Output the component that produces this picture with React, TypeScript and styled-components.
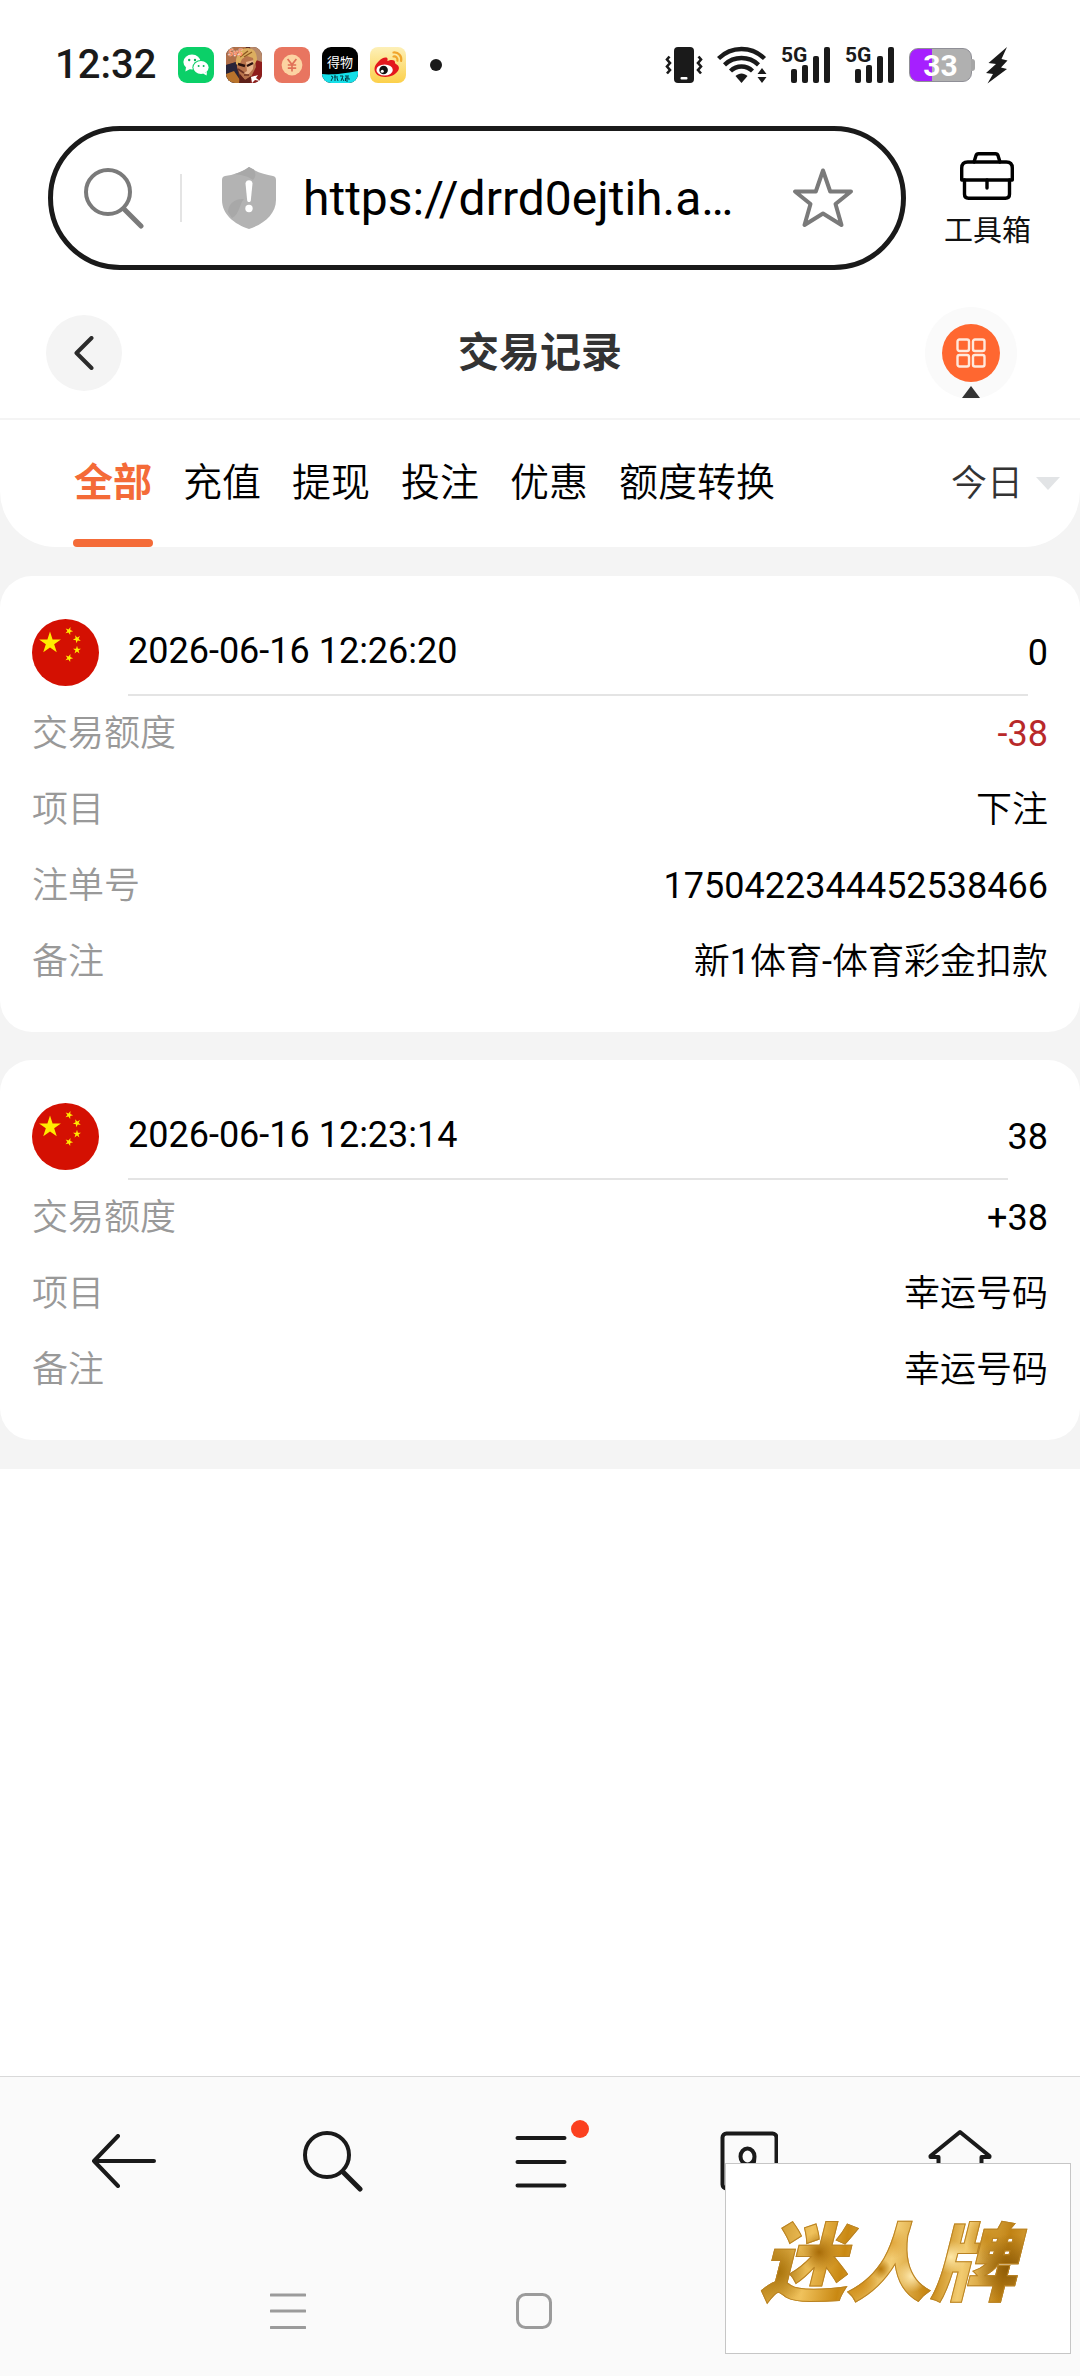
import React, { useState } from 'react';
import styled, { createGlobalStyle, css } from 'styled-components';

const GlobalStyle = createGlobalStyle`
  *, *::before, *::after { box-sizing: border-box; }
  body {
    margin: 0;
    background: #ffffff;
    color: #000000;
    font-family: Roboto, "Noto Sans CJK SC DemiLight", "Noto Sans CJK SC", sans-serif;
  }
  button, input, select { font: inherit; color: inherit; }
  svg { display: block; flex: none; }
`;

const Page = styled.div`
  min-height: 100vh;
  display: flex;
  flex-direction: column;
`;

const iconButton = css`
  padding: 0;
  border: 0;
  background: none;
  display: flex;
  align-items: center;
  justify-content: center;
`;

/* ---------- status bar ---------- */

const StatusBar = styled.div`
  height: 126px;
  padding: 4px 72px 0 55px;
  display: flex;
  align-items: center;
  justify-content: space-between;
  color: #1a1a1a;
`;

const StatusGroup = styled.div<{ $gap: number }>`
  display: flex;
  align-items: center;
  gap: ${(p) => p.$gap}px;
`;

const Clock = styled.time`
  width: 111px;
  font-size: 40px;
  font-weight: 500;
  line-height: 48px;
`;

const MoreDot = styled.span`
  width: 12px;
  height: 12px;
  margin-left: 12px;
  border-radius: 50%;
  background: #1a1a1a;
`;

const Battery = styled.div`
  position: relative;
  width: 63px;
  height: 34px;
  border-radius: 9px;
  border: 1px solid #8f8f96;
  background: linear-gradient(90deg, #a61fff 0 22px, #b0b0b0 22px);
  color: #ffffff;
  font-size: 30px;
  font-weight: 700;
  line-height: 34px;
  text-align: center;

  &::after {
    content: '';
    position: absolute;
    right: -4px;
    top: 10px;
    width: 4px;
    height: 12px;
    border-radius: 0 3px 3px 0;
    background: #a6a6a6;
  }
`;

/* ---------- browser address bar ---------- */

const AddressRow = styled.div`
  display: flex;
  align-items: center;
  gap: 38px;
  padding: 0 49px 0 48px;
`;

const AddressBox = styled.form`
  flex: 1;
  min-width: 0;
  height: 144px;
  padding: 0 47px 0 31px;
  display: flex;
  align-items: center;
  border: 5px solid #1a1a1a;
  border-radius: 72px;
`;

const AddressDivider = styled.span`
  width: 2px;
  height: 48px;
  margin: 0 40px 0 36px;
  background: #e4e4e4;
`;

const AddressInput = styled.input`
  flex: 1;
  min-width: 0;
  height: 64px;
  margin: 0 24px 0 27px;
  padding: 0;
  border: 0;
  outline: 0;
  background: none;
  font-size: 48px;
  color: #000000;
`;

const IconButton = styled.button`
  ${iconButton}
`;

const ToolboxButton = styled.button`
  ${iconButton}
  flex-direction: column;
  gap: 9px;
  padding-top: 9px;
  font-family: Roboto, "Noto Sans CJK SC", sans-serif;
  font-size: 29px;
  line-height: 44px;
  white-space: nowrap;
  color: #111111;
`;

/* ---------- page header ---------- */

const Header = styled.header`
  height: 150px;
  padding: 18px 63px 0 46px;
  display: grid;
  grid-template-columns: 109px 1fr 92px;
  align-items: center;
  border-bottom: 2px solid #f4f4f4;
`;

const BackButton = styled.button`
  ${iconButton}
  width: 76px;
  height: 76px;
  border-radius: 50%;
  background: #f4f4f4;
`;

const Title = styled.h1`
  margin: 0;
  font-size: 41px;
  line-height: 60px;
  font-weight: 700;
  text-align: center;
  color: #333333;
  font-family: Roboto, "Noto Sans CJK SC", sans-serif;
`;

const MenuButton = styled.button`
  ${iconButton}
  position: relative;
  width: 92px;
  height: 92px;
  border-radius: 50%;
  background: #fafafa;

  &::after {
    content: '';
    position: absolute;
    left: 37px;
    bottom: 1px;
    border: 9px solid transparent;
    border-top: 0;
    border-bottom: 12px solid #333333;
  }
`;

const MenuDisc = styled.span`
  width: 58px;
  height: 58px;
  border-radius: 50%;
  background: #ff6730;
  display: flex;
  align-items: center;
  justify-content: center;
`;

/* ---------- records ---------- */

const Records = styled.main`
  background: #f4f4f4;
  padding-bottom: 29px;
`;

const FilterBar = styled.div`
  height: 127px;
  padding: 0 20px 0 74px;
  display: flex;
  justify-content: space-between;
  border-radius: 0 0 56px 56px;
  background: #ffffff;
`;

const Tabs = styled.nav`
  display: flex;
  gap: 31px;
`;

const Tab = styled.button<{ $active: boolean }>`
  position: relative;
  padding: 0;
  border: 0;
  background: none;
  font-family: ${(p) => (p.$active ? 'Roboto, "Noto Sans CJK SC", sans-serif' : 'inherit')};
  font-size: 39px;
  line-height: 127px;
  white-space: nowrap;
  font-weight: ${(p) => (p.$active ? 700 : 400)};
  color: ${(p) => (p.$active ? '#f46b38' : '#000000')};

  &::after {
    content: '';
    position: absolute;
    left: -1px;
    right: -1px;
    bottom: 0;
    height: 8px;
    border-radius: 4px;
    background: ${(p) => (p.$active ? '#f46b38' : 'transparent')};
  }
`;

const Period = styled.label`
  display: flex;
  align-items: center;
  gap: 13px;
`;

const PeriodSelect = styled.select`
  appearance: none;
  width: 72px;
  height: 60px;
  padding: 0;
  border: 0;
  outline: 0;
  background: none;
  font-size: 36px;
  color: #333333;
`;

const Caret = styled.span`
  border: 12px solid transparent;
  border-bottom: 0;
  border-top: 13px solid #e2e4e6;
`;

const List = styled.div`
  display: grid;
  gap: 28px;
  padding-top: 29px;
`;

const Card = styled.article`
  padding: 33px 32px 32px;
  border-radius: 32px;
  background: #ffffff;
  font-size: 36px;
`;

const CardHead = styled.div`
  height: 87px;
  display: flex;
  align-items: center;
`;

const CardDate = styled.time`
  flex: 1;
  align-self: stretch;
  margin-left: 29px;
  border-bottom: 2px solid #e4e4e4;
  line-height: 84px;
`;

const Fields = styled.dl`
  margin: 0;
`;

const Field = styled.div`
  height: 76px;
  display: flex;
  align-items: center;
  justify-content: space-between;
  line-height: 52px;
`;

const FieldName = styled.dt`
  color: #999999;
`;

const FieldValue = styled.dd<{ $negative?: boolean }>`
  margin: 0;
  color: ${(p) => (p.$negative ? '#b8292a' : '#000000')};
`;

/* ---------- bottom bars ---------- */

const Footer = styled.footer`
  position: relative;
  margin-top: auto;
  border-top: 1px solid #d9d9d9;
  background: #fafafa;
`;

const Toolbar = styled.nav`
  height: 168px;
  padding: 0 18px 0 20px;
  display: grid;
  grid-template-columns: repeat(5, 1fr);
`;

const SystemNav = styled.nav`
  height: 131px;
  display: flex;
  justify-content: center;
  gap: 206px;
  padding-right: 12px;
`;

const SystemButton = styled.button`
  ${iconButton}
  width: 40px;
`;

const Stamp = styled.div`
  position: absolute;
  right: 9px;
  bottom: 22px;
  width: 346px;
  height: 191px;
  padding: 0 12px 4px 0;
  display: flex;
  align-items: center;
  justify-content: center;
  border: 1px solid #c6c6c6;
  background: #ffffff;
`;

const StampText = styled.strong`
  padding: 0 16px 0 8px;
  font-family: "Noto Sans CJK SC", sans-serif;
  font-size: 85px;
  font-weight: 900;
  font-style: italic;
  line-height: 120px;
  white-space: nowrap;
  color: transparent;
  -webkit-text-stroke: 1px #b98222;
  background:
    radial-gradient(circle at 24% 46%, #a86c08 0, transparent 9%),
    radial-gradient(circle at 9% 62%, #a8720a 0, transparent 12%),
    radial-gradient(circle at 50% 38%, #e0a63c 0, transparent 10%),
    radial-gradient(circle at 57% 66%, #ffeab0 0, transparent 9%),
    radial-gradient(circle at 38% 70%, #d08a14 0, transparent 10%),
    radial-gradient(circle at 46% 60%, #b97a0c 0, transparent 6%),
    radial-gradient(circle at 63% 74%, #c98712 0, transparent 6%),
    radial-gradient(circle at 71% 50%, #ffe9a8 0, transparent 8%),
    radial-gradient(circle at 92% 60%, #8c5a06 0, transparent 13%),
    radial-gradient(circle at 84% 34%, #c98d1e 0, transparent 9%),
    linear-gradient(100deg, #b47a0e, #f0c25c 22%, #c98812 34%, #f3cd74 50%, #c58411 64%, #f2cb70 74%, #c08214 88%, #e3ae48);
  background-clip: text;
  -webkit-background-clip: text;
`;

/* ---------- drawings ---------- */

const WeChatIcon = () => (
  <svg width="36" height="36" viewBox="0 0 36 36">
    <rect width="36" height="36" rx="9" fill="#0bd068" />
    <ellipse cx="14" cy="15" rx="8.6" ry="7.4" fill="#fff" />
    <path d="M8 20 7.4 24.6 12 22z" fill="#fff" />
    <ellipse cx="23" cy="20.5" rx="8.6" ry="7.4" fill="#0bd068" />
    <ellipse cx="23" cy="20.5" rx="7.6" ry="6.4" fill="#fff" />
    <path d="M29 25 28.6 28.6 25 26.4z" fill="#fff" />
    <g fill="#0bb45a">
      <circle cx="11.2" cy="13" r="1.2" />
      <circle cx="17" cy="13" r="1.2" />
      <circle cx="20.6" cy="19" r="1" />
      <circle cx="25.6" cy="19" r="1" />
    </g>
  </svg>
);

const GameIcon = () => (
  <svg width="36" height="36" viewBox="0 0 36 36">
    <clipPath id="game"><rect width="36" height="36" rx="9" /></clipPath>
    <g clipPath="url(#game)">
      <rect width="36" height="36" fill="#5a2a22" />
      <path d="M0 0h20L14 14 0 18z" fill="#b0704a" />
      <path d="M24 0h12v20l-8-4z" fill="#b98a6a" />
      <path d="M27 12l9 3v21H24z" fill="#8e1d1c" />
      <path d="M0 18l10-3 4 21H0z" fill="#27243a" />
      <path d="M0 27l8-3 8 12H0z" fill="#b9732b" />
      <path d="M11 12 20 6l9 5 1 9-5 10-6 3-5-5-3-8z" fill="#b8734c" />
      <path d="M20 15l1 9-3 2 4 2 5-6 1-9z" fill="#e8b48c" />
      <path d="M10 17C9 8 15 1 22 1c6 0 9 5 9 12l-3 5-1-7-6-2-5 3-3 7z" fill="#dcae60" />
      <path d="M14 10l8-6M18 10l8-5" stroke="#8f5a22" strokeWidth="1.4" />
      <path d="M12 17l7 2M21 19l6-3" stroke="#2c120e" strokeWidth="2.4" />
      <path d="M12 22l6 4M18 28h5" stroke="#6e3222" strokeWidth="1.6" />
      <path d="M14 27l5 6 6-4-1 7H13z" fill="#5e2018" />
      <path d="M25 30l7-2-2 3 4 3-5-1-3 3z" fill="#fff" />
      <text x="2" y="9" fill="#ff5a1e" stroke="#fff" strokeWidth="0.3" fontFamily="Roboto, sans-serif" fontWeight="700" fontStyle="italic" fontSize="9">5v5</text>
    </g>
  </svg>
);

const CoinIcon = () => (
  <svg width="36" height="36" viewBox="0 0 36 36">
    <rect width="36" height="36" rx="8" fill="#e87560" />
    <circle cx="18" cy="18" r="10.4" fill="#fcd3a2" />
    <path d="M13.6 12 18 17.6 22.4 12M18 17.6V24.4M13.8 18h8.4M13.8 21.2h8.4" fill="none" stroke="#e07058" strokeWidth="1.7" />
  </svg>
);

const ShopIcon = () => (
  <svg width="36" height="36" viewBox="0 0 36 36">
    <clipPath id="shop"><rect width="36" height="36" rx="9" /></clipPath>
    <g clipPath="url(#shop)">
      <rect width="36" height="36" fill="#000" />
      <path d="M0 27c8 1 20 0 36-3v12H0z" fill="#15dfe8" />
      <text x="18" y="20" textAnchor="middle" fill="#fff" fontFamily="Noto Sans CJK SC, sans-serif" fontWeight="400" fontSize="13">得物</text>
      <path d="M9 29l2 1-2 4M13 28v6M12 30h4M15 31l1 3M18 29h3l-2 5M20 31l2 3M23 29h4M25 29v6M23.500 34v-3h3.500v2" fill="none" stroke="#063a44" strokeWidth="1" />
    </g>
  </svg>
);

const WeiboIcon = () => (
  <svg width="36" height="36" viewBox="0 0 36 36">
    <defs>
      <linearGradient id="weibo" x1="0" y1="0" x2="0" y2="1">
        <stop offset="0" stopColor="#fdf0b8" />
        <stop offset="1" stopColor="#fcd04a" />
      </linearGradient>
    </defs>
    <rect width="36" height="36" rx="8" fill="url(#weibo)" />
    <path d="M4.500 22c0-5 7-11.500 11-11.500 2.600 0 2.300 2.200 1.800 3.600 3-1.400 8-2 7.700 1.500-.1 1 .4 1.200 1.300 1.700C33 20.600 26 30 15.500 30 9 30 4.500 27 4.500 22z" fill="#e3171d" />
    <ellipse cx="14.600" cy="23" rx="8.200" ry="5.600" fill="#fff" />
    <circle cx="13.600" cy="23" r="4.300" fill="#111" />
    <circle cx="12.300" cy="24.300" r="1.500" fill="#fff" />
    <path d="M23.500 5.500c5-.6 8.600 3.500 7.600 8.500M23.500 9.500c2.600-.4 4.400 1.600 3.900 4.200" fill="none" stroke="#f0a52c" strokeWidth="2.200" strokeLinecap="round" />
  </svg>
);

const VibrateIcon = () => (
  <svg width="38" height="38" viewBox="0 0 38 38">
    <rect x="9" y="1" width="20" height="36" rx="4" fill="#1a1a1a" />
    <rect x="15.500" y="31" width="7" height="2.400" rx="1" fill="#fff" />
    <path d="M4.500 10.500 2 13.500l3 3.500-3 3.500 3 3.500-3 3.500M33.500 10.500l2.500 3-3 3.500 3 3.500-3 3.500 3 3.500" fill="none" stroke="#1a1a1a" strokeWidth="2.600" />
  </svg>
);

const WifiIcon = () => (
  <svg width="50" height="38" viewBox="0 0 50 38">
    <g fill="none" stroke="#1a1a1a" strokeWidth="4.400">
      <path d="M1.500 12.500C14.500-.2 34.500-.2 47.500 12.500" />
      <path d="M7.500 18.800c9.500-9 24.500-9 34 0" />
      <path d="M13.500 25c6.300-6 15.700-6 22 0" />
    </g>
    <path d="M18.500 30c3.600-3.500 8.400-3.500 12 0l-6 7z" fill="#1a1a1a" />
    <path d="M40.500 28h9l-4.500-6zM40.500 31h9l-4.500 6z" fill="#1a1a1a" />
  </svg>
);

const SignalIcon = () => (
  <svg width="50" height="54" viewBox="-1 -8 50 54">
    <text x="-1" y="16" fill="#1a1a1a" fontFamily="Roboto, sans-serif" fontWeight="700" fontSize="21">5G</text>
    <g fill="#1a1a1a">
      <rect x="9" y="23" width="6" height="14" rx="2" />
      <rect x="20" y="19" width="6" height="18" rx="2" />
      <rect x="31" y="10" width="6" height="27" rx="2" />
      <rect x="42" y="1" width="6" height="36" rx="2" />
    </g>
  </svg>
);

const BoltIcon = () => (
  <svg width="22" height="38" viewBox="0 0 22 38">
    <path d="M21 1 2.500 17 10 18 0 27l7 1-5.500 9.500L21 23l-6-1.500 6.500-7-6-1.500z" fill="#1a1a1a" />
  </svg>
);

const SearchIcon = ({ color }: { color: string }) => (
  <svg width="60" height="62" viewBox="0 0 60 62" fill="none" stroke={color} strokeLinecap="round">
    <circle cx="24" cy="25" r="22" strokeWidth="4" />
    <path d="M40 42 57 59" strokeWidth="5" />
  </svg>
);

const ShieldIcon = () => (
  <svg width="54" height="64" viewBox="0 0 54 64">
    <path d="M27 1c7 5 16 8 24 9 2 .4 3 1.600 3 4v20c0 14-12 24-27 29C12 58 0 48 0 34V14c0-2.400 1-3.600 3-4 8-1 17-4 24-9z" fill="#b3b3b3" />
    <path d="M27 1c-4 3-9 5.500-14 7 6 1 13 2 18 6 3-3 3-6 1-10.500zM6 46c0-8 7-14 16-13-5 5-4 15-12 19z" fill="#a8a8a8" />
    <path d="M23.500 17.500c0-4.500 7-4.500 7 0l-1.700 17c-.3 2-3.300 2-3.600 0z" fill="#fff" />
    <circle cx="27" cy="42.500" r="3.700" fill="#fff" />
  </svg>
);

const StarIcon = () => (
  <svg width="62" height="62" viewBox="0 0 62 62">
    <path d="M31 3.500 38.200 24.500H59L43.500 37 49.500 58 31 46.500 12.500 58 18.500 37 3 24.500H23.800z" fill="none" stroke="#7a7a7a" strokeWidth="4" strokeLinejoin="round" />
  </svg>
);

const ToolboxIcon = () => (
  <svg width="54" height="48" viewBox="0 0 54 48" fill="none" stroke="#000" strokeWidth="3.400" strokeLinejoin="round" strokeLinecap="round">
    <path d="M14 10l2-6.500q.5-1.700 2.500-1.700h17q2 0 2.500 1.700L40 10" />
    <path d="M1.700 28V16q0-6 6-6h38.600q6 0 6 6v12z" />
    <path d="M4.500 28v14.300q0 4 4 4h37q4 0 4-4V28M27 28v8" />
  </svg>
);

const Flag = () => {
  const star = 'M0-1 .2245-.309 .951-.309 .363.118 .588.809 0 .382-.588.809-.363.118-.951-.309-.2245-.309z';
  return (
    <svg width="67" height="67" viewBox="0 0 67 67" role="img" aria-label="中国">
      <circle cx="33.500" cy="33.500" r="33.500" fill="#d41002" />
      <g fill="#ffec00">
        <path d={star} transform="translate(18 24) scale(11.500)" />
        <path d={star} transform="translate(37 12) rotate(20) scale(4.200)" />
        <path d={star} transform="translate(45 20) rotate(45) scale(4.200)" />
        <path d={star} transform="translate(45 31) scale(4.200)" />
        <path d={star} transform="translate(37 39) rotate(20) scale(4.200)" />
      </g>
    </svg>
  );
};

const MenuLines = () => (
  <svg width="102" height="84" viewBox="0 -6 102 84">
    <path d="M27.500 13H74.500M27.500 37H74.500M27.500 60.500H74.500" stroke="#1a1a1a" strokeWidth="4" strokeLinecap="round" />
    <circle cx="90" cy="4" r="9" fill="#fb401f" />
  </svg>
);

/* ---------- data ---------- */

const tabs = ['全部', '充值', '提现', '投注', '优惠', '额度转换'];

type RecordItem = {
  date: string;
  balance: string;
  fields: { name: string; value: string; negative?: boolean }[];
};

const records: RecordItem[] = [
  {
    date: '2026-06-16 12:26:20',
    balance: '0',
    fields: [
      { name: '交易额度', value: '-38', negative: true },
      { name: '项目', value: '下注' },
      { name: '注单号', value: '1750422344452538466' },
      { name: '备注', value: '新1体育-体育彩金扣款' },
    ],
  },
  {
    date: '2026-06-16 12:23:14',
    balance: '38',
    fields: [
      { name: '交易额度', value: '+38' },
      { name: '项目', value: '幸运号码' },
      { name: '备注', value: '幸运号码' },
    ],
  },
];

export default function App() {
  const [active, setActive] = useState(tabs[0]);
  const [url, setUrl] = useState('https://drrd0ejtih.a…');

  return (
    <Page>
      <GlobalStyle />

      <StatusBar>
        <StatusGroup $gap={12}>
          <Clock>12:32</Clock>
          <WeChatIcon />
          <GameIcon />
          <CoinIcon />
          <ShopIcon />
          <WeiboIcon />
          <MoreDot />
        </StatusGroup>
        <StatusGroup $gap={14}>
          <VibrateIcon />
          <WifiIcon />
          <SignalIcon />
          <SignalIcon />
          <Battery>33</Battery>
          <BoltIcon />
        </StatusGroup>
      </StatusBar>

      <AddressRow>
        <AddressBox onSubmit={(e) => e.preventDefault()}>
          <SearchIcon color="#7a7a7a" />
          <AddressDivider />
          <ShieldIcon />
          <AddressInput aria-label="网址" value={url} onChange={(e) => setUrl(e.target.value)} />
          <IconButton type="button" aria-label="收藏"><StarIcon /></IconButton>
        </AddressBox>
        <ToolboxButton type="button">
          <ToolboxIcon />
          工具箱
        </ToolboxButton>
      </AddressRow>

      <Header>
        <BackButton type="button" aria-label="返回">
          <svg width="20" height="34" viewBox="0 0 20 34">
            <path d="M17.500 2 2.500 17l15 15" fill="none" stroke="#2b2b2b" strokeWidth="4" strokeLinecap="round" strokeLinejoin="round" />
          </svg>
        </BackButton>
        <Title>交易记录</Title>
        <MenuButton type="button" aria-label="菜单">
          <MenuDisc>
            <svg width="30" height="30" viewBox="0 0 30 30" fill="none" stroke="#ffe9dc" strokeWidth="2.400">
              <rect x="1.500" y="1.500" width="11.500" height="11.500" rx="2" />
              <rect x="17" y="1.500" width="11.500" height="11.500" rx="2" />
              <rect x="1.500" y="17" width="11.500" height="11.500" rx="2" />
              <rect x="17" y="17" width="11.500" height="11.500" rx="2" />
            </svg>
          </MenuDisc>
        </MenuButton>
      </Header>

      <Records>
        <FilterBar>
          <Tabs>
            {tabs.map((t) => (
              <Tab key={t} type="button" $active={t === active} onClick={() => setActive(t)}>
                {t}
              </Tab>
            ))}
          </Tabs>
          <Period>
            <PeriodSelect aria-label="日期">
              <option>今日</option>
            </PeriodSelect>
            <Caret />
          </Period>
        </FilterBar>

        <List>
          {records.map((r) => (
            <Card key={r.date}>
              <CardHead>
                <Flag />
                <CardDate>{r.date}</CardDate>
                <span>{r.balance}</span>
              </CardHead>
              <Fields>
                {r.fields.map((f) => (
                  <Field key={f.name}>
                    <FieldName>{f.name}</FieldName>
                    <FieldValue $negative={f.negative}>{f.value}</FieldValue>
                  </Field>
                ))}
              </Fields>
            </Card>
          ))}
        </List>
      </Records>

      <Footer>
        <Toolbar>
          <IconButton type="button" aria-label="后退">
            <svg width="66" height="54" viewBox="0 0 66 54">
              <path d="M27 2 3 27l24 25M3 27H63" fill="none" stroke="#1a1a1a" strokeWidth="4" strokeLinecap="round" strokeLinejoin="round" />
            </svg>
          </IconButton>
          <IconButton type="button" aria-label="搜索"><SearchIcon color="#1a1a1a" /></IconButton>
          <IconButton type="button" aria-label="更多"><MenuLines /></IconButton>
          <IconButton type="button" aria-label="窗口">
            <svg width="58" height="60" viewBox="0 0 58 60" fill="none" stroke="#1a1a1a" strokeWidth="4">
              <rect x="2.500" y="2.500" width="54" height="55" rx="4" />
              <path d="M34.500 25.500a7 8 0 1 0-14 0a7 8 0 1 0 14 0q0 10-7 18" />
            </svg>
          </IconButton>
          <IconButton type="button" aria-label="主页">
            <svg width="70" height="64" viewBox="0 0 70 64" fill="none" stroke="#1a1a1a" strokeWidth="4" strokeLinejoin="round">
              <path d="M37 3 7.500 27v1h8v33h43V28h8v-1z" />
            </svg>
          </IconButton>
        </Toolbar>
        <SystemNav>
          <SystemButton type="button" aria-label="最近任务">
            <svg width="36" height="38" viewBox="0 0 36 38">
              <path d="M1 3H35M1 19H35M1 35.500H35" stroke="#9b9b9b" strokeWidth="3" strokeLinecap="round" />
            </svg>
          </SystemButton>
          <SystemButton type="button" aria-label="桌面">
            <svg width="36" height="36" viewBox="0 0 36 36">
              <rect x="1.500" y="1.500" width="33" height="33" rx="8" fill="none" stroke="#9b9b9b" strokeWidth="3" />
            </svg>
          </SystemButton>
          <SystemButton type="button" aria-label="返回上一级">
            <svg width="36" height="36" viewBox="0 0 36 36">
              <path d="M24 3 9 18l15 15" fill="none" stroke="#9b9b9b" strokeWidth="3" strokeLinecap="round" />
            </svg>
          </SystemButton>
        </SystemNav>
        <Stamp>
          <StampText>迷人牌</StampText>
        </Stamp>
      </Footer>
    </Page>
  );
}
